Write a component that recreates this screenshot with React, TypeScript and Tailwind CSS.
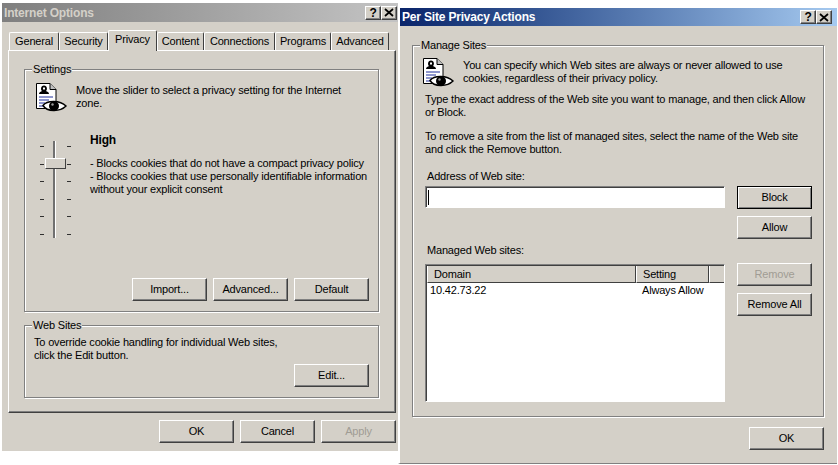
import React from 'react';

const raised =
  'border border-t-white border-l-white border-r-[#404040] border-b-[#404040] shadow-[inset_-1px_-1px_0_#808080]';

const PrivacyIcon = () => (
  <svg width="32" height="32" viewBox="0 0 32 32" className="shrink-0">
    <path d="M1.5 1.5H15L21 7.5V26.5H1.5Z" fill="#fff" stroke="#000" />
    <path d="M15 1.5V7.5H21" fill="#c0c0c0" stroke="#000" />
    <path d="M4 12C4 10 6 9.500 7 9C5.500 8 5.500 3.500 9 3.500C12.500 3.500 12.500 8 11 9C12 9.500 14 10 14 12Z" fill="#000" />
    <rect x="8" y="5.500" width="2" height="2" fill="#fff" />
    <path d="M4 15H18M4 18H14M4 21H10M4 24H10" stroke="#1f2f9c" />
    <path d="M8 23.500C12 18 25 18 31 24C25 30 12 30 8 23.500Z" fill="#fff" stroke="#000" strokeWidth="1.500" />
    <circle cx="19" cy="24" r="5" fill="#000" />
    <circle cx="17.500" cy="22.500" r="1.200" fill="#9a9a9a" />
  </svg>
);

const TitleButton = ({ label }: { label: string }) => (
  <div className={`w-[16px] h-[14px] bg-[#d4d0c8] ${raised} flex items-center justify-center`}>
    {label === 'x' ? (
      <svg width="10" height="9" viewBox="0 0 10 9">
        <path d="M1 1L9 8M9 1L1 8" stroke="#000" strokeWidth="1.700" />
      </svg>
    ) : (
      <span className="text-[12px] leading-[12px] font-bold text-black">?</span>
    )}
  </div>
);

const Button = ({
  children,
  disabled,
  isDefault,
  className = '',
}: {
  children: React.ReactNode;
  disabled?: boolean;
  isDefault?: boolean;
  className?: string;
}) => (
  <div
    className={`w-[75px] h-[23px] shrink-0 flex items-center justify-center bg-[#d4d0c8] ${
      isDefault ? 'border border-black shadow-[inset_1px_1px_0_#fff,inset_-1px_-1px_0_#808080]' : raised
    } ${disabled ? 'text-[#a09c94]' : 'text-black'} ${className}`}
  >
    {children}
  </div>
);

const GroupBox = ({
  title,
  className = '',
  children,
}: {
  title: string;
  className?: string;
  children: React.ReactNode;
}) => (
  <div className={`relative border border-[#808080] shadow-[inset_1px_1px_0_#fff,1px_1px_0_#fff] ${className}`}>
    <span className="absolute left-[7px] top-[-7px] bg-[#d4d0c8] px-px leading-[13px]">{title}</span>
    {children}
  </div>
);

const tabs = [
  { name: 'General', w: 'w-[50px]' },
  { name: 'Security', w: 'w-[49px]' },
  { name: 'Privacy', w: 'w-[49px]', active: true },
  { name: 'Content', w: 'w-[47px]' },
  { name: 'Connections', w: 'w-[71px]' },
  { name: 'Programs', w: 'w-[56px]' },
  { name: 'Advanced', w: 'w-[58px]' },
];

const Ticks = () => (
  <div className="flex flex-col justify-between h-[89px] mt-[5px]">
    {[0, 1, 2, 3, 4, 5].map((i) => (
      <div key={i} className="w-[4px] h-px bg-[#303030]" />
    ))}
  </div>
);

const Slider = () => (
  <div className="flex w-[31px] justify-between">
    <Ticks />
    <div className="relative w-[31px] -mx-[4px] flex justify-center pr-[2px]">
      <div className="w-[3px] h-[97px] bg-[#707070] border-r border-white" />
      <div className="absolute left-[5px] top-[17px] w-[21px] h-[11px] bg-[#d4d0c8] border border-t-white border-l-white border-r-[#404040] border-b-[#404040]" />
    </div>
    <Ticks />
  </div>
);

function InternetOptions() {
  return (
    <div className="w-[397px] h-[448px] mt-[3px] ml-px shrink-0 bg-[#d4d0c8] border-l border-white flex flex-col">
      <div className="h-[19px] shrink-0 bg-gradient-to-r from-[#7f7f7f] to-[#c4c4c4] flex items-center justify-between pl-[2px] pr-px">
        <span className="font-bold text-[12px] text-[#d4d0c8]">Internet Options</span>
        <div className="flex">
          <TitleButton label="?" />
          <TitleButton label="x" />
        </div>
      </div>

      <div className="flex items-end h-[28px] shrink-0 pl-[7px]">
        {tabs.map((t) => (
          <div
            key={t.name}
            className={`${t.w} flex justify-center items-center bg-[#d4d0c8] border-t border-l border-r border-t-white border-l-white border-r-[#404040] rounded-t-[2px] ${
              t.active ? 'h-[21px] relative z-10 -mb-px pb-[3px]' : 'h-[18px]'
            }`}
          >
            {t.name}
          </div>
        ))}
      </div>

      <div className={`w-[388px] h-[363px] ml-[6px] shrink-0 bg-[#d4d0c8] ${raised} pl-[15px] pt-[18px]`}>
        <GroupBox title="Settings" className="w-[355px] h-[243px] flex flex-col">
          <div className="flex items-start pl-[10px] pt-[12px] gap-[9px]">
            <PrivacyIcon />
            <p className="leading-[13px] pt-[2px] w-[285px]">
              Move the slider to select a privacy setting for the Internet zone.
            </p>
          </div>
          <div className="flex items-start pl-[15px] pt-[27px]">
            <Slider />
            <div className="ml-[19px] w-[285px] leading-[13px] -mt-[7px]">
              <p className="font-bold text-[12px]">High</p>
              <p className="mt-[10px]">- Blocks cookies that do not have a compact privacy policy</p>
              <p>- Blocks cookies that use personally identifiable information without your explicit consent</p>
            </div>
          </div>
          <div className="flex justify-end gap-[6px] pr-[9px] mt-auto mb-[10px]">
            <Button>Import...</Button>
            <Button>Advanced...</Button>
            <Button>Default</Button>
          </div>
        </GroupBox>

        <GroupBox title="Web Sites" className="w-[355px] h-[73px] mt-[13px] flex flex-col">
          <p className="leading-[13px] pl-[9px] pt-[10px] w-[265px]">
            To override cookie handling for individual Web sites, click the Edit button.
          </p>
          <div className="flex justify-end pr-[9px] mt-auto mb-[10px]">
            <Button>Edit...</Button>
          </div>
        </GroupBox>
      </div>

      <div className="flex justify-end gap-[6px] pr-[2px] mt-[7px]">
        <Button>OK</Button>
        <Button>Cancel</Button>
        <Button disabled>Apply</Button>
      </div>
    </div>
  );
}

function PerSitePrivacy() {
  return (
    <div className="w-[439px] h-[457px] mt-[7px] shrink-0 bg-[#d4d0c8] border-l-2 border-t border-white border-b-[#808080] border-b flex flex-col">
      <div className="h-[18px] shrink-0 bg-gradient-to-r from-[#0a246a] to-[#a6caf0] flex items-center justify-between pl-[2px] pr-[5px]">
        <span className="font-bold text-[12px] text-white">Per Site Privacy Actions</span>
        <div className="flex">
          <TitleButton label="?" />
          <TitleButton label="x" />
        </div>
      </div>

      <GroupBox title="Manage Sites" className="w-[412px] h-[372px] ml-[12px] mt-[19px] shrink-0 pl-[9px] pt-[11px]">
        <div className="flex items-start gap-[9px]">
          <PrivacyIcon />
          <p className="leading-[13px] pt-[2px] w-[345px]">
            You can specify which Web sites are always or never allowed to use cookies, regardless of their privacy policy.
          </p>
        </div>
        <p className="leading-[13px] mt-[4px] ml-[3px] w-[390px]">
          Type the exact address of the Web site you want to manage, and then click Allow or Block.
        </p>
        <p className="leading-[13px] mt-[11px] ml-[3px] w-[390px]">
          To remove a site from the list of managed sites, select the name of the Web site and click the Remove button.
        </p>
        <p className="leading-[13px] mt-[14px] ml-[5px]">Address of Web site:</p>

        <div className="flex items-start gap-[12px] ml-[3px] mt-[3px]">
          <div className="w-[300px] h-[22px] bg-white border border-t-[#808080] border-l-[#808080] border-r-white border-b-white shadow-[inset_1px_1px_0_#404040] flex items-center pl-[2px]">
            <div className="w-px h-[15px] bg-black" />
          </div>
          <div className="flex flex-col gap-[7px]">
            <Button isDefault>Block</Button>
            <Button>Allow</Button>
          </div>
        </div>

        <p className="leading-[13px] mt-[5px] ml-[5px]">Managed Web sites:</p>

        <div className="flex items-start gap-[12px] ml-[3px] mt-[6px]">
          <div className="w-[300px] h-[138px] mt-px bg-white border border-t-[#808080] border-l-[#808080] border-r-white border-b-white shadow-[inset_1px_1px_0_#404040]">
            <div className="flex h-[17px] bg-[#d4d0c8] ml-px mt-px shadow-[inset_0_-1px_0_#404040]">
              <div className="w-[209px] pl-[6px] leading-[15px] pt-px border-r border-r-[#404040] border-b border-b-[#404040] border-l border-l-white">
                Domain
              </div>
              <div className="w-[73px] pl-[6px] leading-[15px] pt-px border-r border-r-[#404040] border-b border-b-[#404040] border-l border-l-white">
                Setting
              </div>
              <div className="flex-1 border-b border-b-[#404040] border-l border-l-white" />
            </div>
            <div className="flex leading-[13px] pt-px pl-[4px]">
              <span className="w-[212px]">10.42.73.22</span>
              <span>Always Allow</span>
            </div>
          </div>
          <div className="flex flex-col gap-[7px]">
            <Button disabled>Remove</Button>
            <Button>Remove All</Button>
          </div>
        </div>
      </GroupBox>

      <div className="flex justify-end pr-[13px] mt-[10px]">
        <Button>OK</Button>
      </div>
    </div>
  );
}

export default function App() {
  return (
    <div className="w-[838px] h-[465px] bg-white overflow-hidden flex items-start text-[11px] tracking-[-0.18px] text-black font-['Liberation_Sans',sans-serif]">
      <InternetOptions />
      <PerSitePrivacy />
    </div>
  );
}
